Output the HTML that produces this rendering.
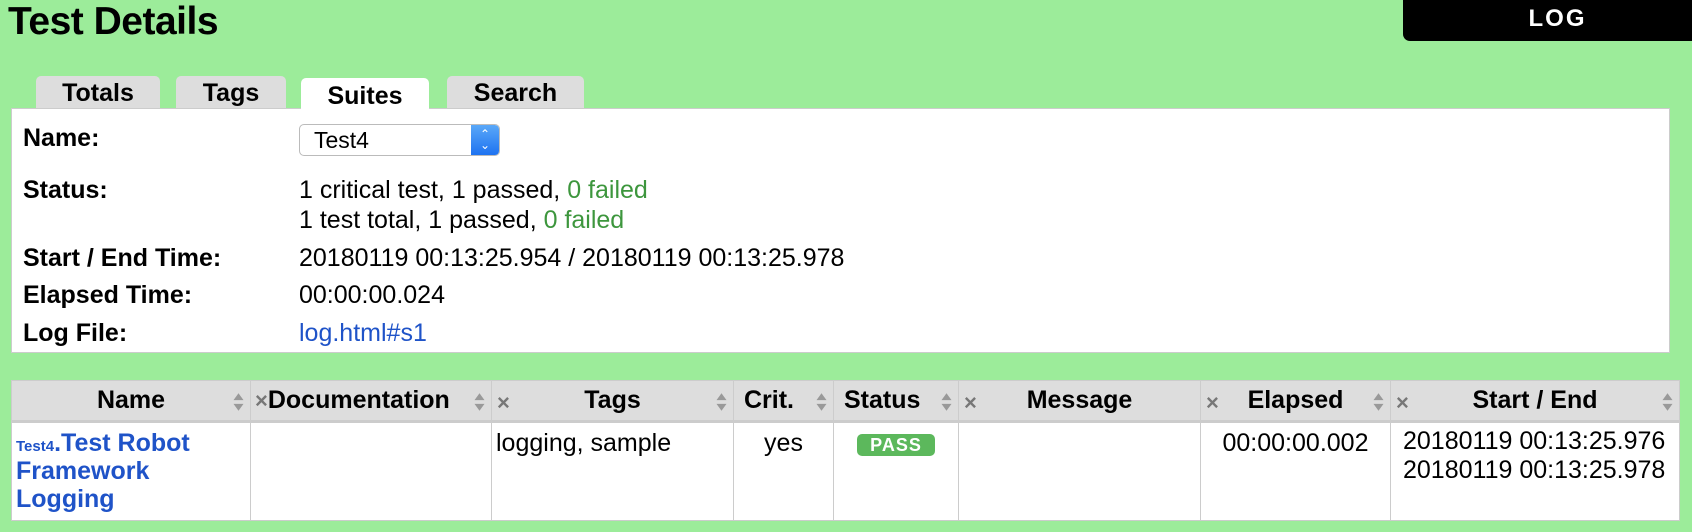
<!DOCTYPE html>
<html><head><meta charset="utf-8"><style>
*{margin:0;padding:0;box-sizing:border-box}
body{width:1692px;height:532px;background:#9cec9a;font-family:"Liberation Sans",Arial,sans-serif;position:relative;overflow:hidden;color:#000}
.a{position:absolute;white-space:nowrap}
h1{position:absolute;left:8px;top:0px;font-size:39px;font-weight:bold;letter-spacing:-0.5px}
.log{position:absolute;left:1403px;top:0;width:289px;height:41px;background:#000;border-bottom-left-radius:7px;color:#fff;font-weight:bold;font-size:24px;letter-spacing:2px;text-align:center;line-height:38px;padding-left:20px}
.tab{position:absolute;top:76px;height:32px;background:#ddd;border-radius:5px 5px 0 0;font-weight:bold;font-size:25px;text-align:center;line-height:34px}
.box{position:absolute;left:11px;top:108px;width:1659px;height:245px;background:#fff;border:1px solid #ccc}
.lbl{position:absolute;left:23px;font-weight:bold;font-size:25px}
.val{position:absolute;left:299px;font-size:25px}
.g{color:#3d963d}
.blue{color:#1f53c8}
table{position:absolute;left:11px;top:380px;width:1669px;border-collapse:collapse;background:#fff}
th{background:#ddd;height:41px;font-size:25px;font-weight:bold;border:1px solid #ccc;border-bottom:3px solid #ccc;position:relative;text-align:center;white-space:nowrap}
td{height:99px;vertical-align:top;font-size:25px;border:1px solid #ccc;padding-top:6px}
.s{position:absolute;right:5px;top:11px;width:13px;height:20px}
.x{position:absolute;left:5px;top:9px;color:#777;font-size:22px;font-weight:bold}
</style></head><body>
<h1>Test Details</h1>
<div class="log">LOG</div>
<div class="tab" style="left:36px;width:124px">Totals</div>
<div class="tab" style="left:176px;width:110px">Tags</div>
<div class="tab" style="left:447px;width:137px">Search</div>
<div class="box"></div>
<div class="tab" style="left:301px;width:128px;top:78px;height:32px;background:#fff;line-height:36px">Suites</div>
<div class="lbl" style="top:124px">Name:</div>
<div class="a" style="left:299px;top:124px;width:201px;height:32px;border:1px solid #bbb;border-radius:5px;background:#fff;font-size:23px;line-height:30px;padding-left:14px;overflow:hidden">Test4<div style="position:absolute;right:0;top:0;width:28px;height:32px;background:linear-gradient(#5aa8f8,#1a6ff0);border-radius:0 4px 4px 0;color:#fff;font-size:12px;line-height:11px;text-align:center;padding-top:4px">⌃<br>⌄</div></div>
<div class="lbl" style="top:176px">Status:</div>
<div class="val" style="top:176px">1 critical test, 1 passed, <span class="g">0 failed</span></div>
<div class="val" style="top:206px">1 test total, 1 passed, <span class="g">0 failed</span></div>
<div class="lbl" style="top:244px">Start / End Time:</div>
<div class="val" style="top:244px">20180119 00:13:25.954 / 20180119 00:13:25.978</div>
<div class="lbl" style="top:281px">Elapsed Time:</div>
<div class="val" style="top:281px">00:00:00.024</div>
<div class="lbl" style="top:319px">Log File:</div>
<div class="val blue" style="top:319px">log.html#s1</div>
<table>
<tr>
<th style="width:239px">Name<svg class="s" viewBox="0 0 10 16"><path d="M5 1L9 6.5H1Z M5 15L9 9.5H1Z" fill="#999"/></svg></th>
<th style="width:241px;text-align:left;padding-left:4px"><span style="color:#777;font-size:22px">×</span>Documentation<svg class="s" viewBox="0 0 10 16"><path d="M5 1L9 6.5H1Z M5 15L9 9.5H1Z" fill="#999"/></svg></th>
<th style="width:242px"><span class="x">×</span>Tags<svg class="s" viewBox="0 0 10 16"><path d="M5 1L9 6.5H1Z M5 15L9 9.5H1Z" fill="#999"/></svg></th>
<th style="width:100px;text-align:left;padding-left:10px">Crit.<svg class="s" viewBox="0 0 10 16"><path d="M5 1L9 6.5H1Z M5 15L9 9.5H1Z" fill="#999"/></svg></th>
<th style="width:125px;text-align:left;padding-left:10px">Status<svg class="s" viewBox="0 0 10 16"><path d="M5 1L9 6.5H1Z M5 15L9 9.5H1Z" fill="#999"/></svg></th>
<th style="width:242px"><span class="x">×</span>Message</th>
<th style="width:190px"><span class="x">×</span>Elapsed<svg class="s" viewBox="0 0 10 16"><path d="M5 1L9 6.5H1Z M5 15L9 9.5H1Z" fill="#999"/></svg></th>
<th><span class="x">×</span>Start / End<svg class="s" viewBox="0 0 10 16"><path d="M5 1L9 6.5H1Z M5 15L9 9.5H1Z" fill="#999"/></svg></th>
</tr>
<tr>
<td style="padding-left:4px;line-height:28px;font-weight:bold;color:#1f53c8"><span style="font-size:15px;line-height:10px">Test4</span>.Test Robot<br>Framework<br>Logging</td>
<td></td>
<td style="padding-left:4px">logging, sample</td>
<td style="text-align:center">yes</td>
<td style="text-align:center"><span style="display:inline-block;background:#5cb85c;color:#fff;font-weight:bold;font-size:18px;line-height:20px;border-radius:5px;padding:1px 13px;margin-top:4px;letter-spacing:1px">PASS</span></td>
<td></td>
<td style="text-align:center">00:00:00.002</td>
<td style="padding-left:12px;line-height:29px;padding-top:4px">20180119 00:13:25.976<br>20180119 00:13:25.978</td>
</tr>
</table>
</body></html>
